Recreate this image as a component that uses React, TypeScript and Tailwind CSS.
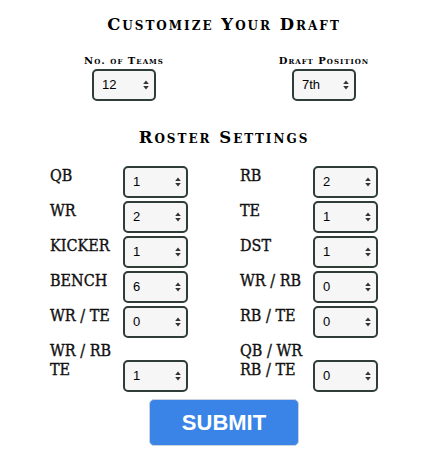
import { useState } from 'react'

const heading = "font-['DejaVu_Serif',serif] font-bold [font-variant:small-caps] text-black"
const label =
  "font-['DejaVu_Serif_Condensed','DejaVu_Serif',serif] text-[16px] leading-[19px] text-[#111] [-webkit-text-stroke:0.35px_#111]"

function Arrows() {
  return (
    <svg
      width="6"
      height="10"
      viewBox="0 0 6 10"
      className="pointer-events-none absolute right-[7px] top-1/2 -translate-y-1/2"
    >
      <path d="M3 0.5L5.8 4H0.2z M3 9.5L5.8 6H0.2z" fill="#333" />
    </svg>
  )
}

function Select({ value, options, w = 'w-[65px]' }: { value: string; options: string[]; w?: string }) {
  const [v, setV] = useState(value)
  return (
    <div className={`relative h-[32px] shrink-0 ${w}`}>
      <select
        value={v}
        onChange={(e) => setV(e.target.value)}
        className="h-full w-full appearance-none rounded-[5px] border-2 border-[#2e3d36] bg-[#f6f6f6] pl-[8px] font-['Liberation_Sans',Arial,sans-serif] text-[13px] text-black outline-none"
      >
        {options.map((o) => (
          <option key={o} value={o}>
            {o}
          </option>
        ))}
      </select>
      <Arrows />
    </div>
  )
}

const nums = ['0', '1', '2', '3', '4', '5', '6', '7', '8']

const rows: [string, string, string, string][] = [
  ['QB', '1', 'RB', '2'],
  ['WR', '2', 'TE', '1'],
  ['KICKER', '1', 'DST', '1'],
  ['BENCH', '6', 'WR / RB', '0'],
  ['WR / TE', '0', 'RB / TE', '0'],
]

function Field({ name, value, tall }: { name: string; value: string; tall?: boolean }) {
  return (
    <div className="flex items-start">
      <div className={`${label} w-[73px]`}>{name}</div>
      <div className={tall ? 'mt-[19px]' : ''}>
        <Select value={value} options={nums} />
      </div>
    </div>
  )
}

export default function App() {
  const teams = ['8', '10', '12', '14', '16']
  const positions = Array.from({ length: 16 }, (_, i) => {
    const n = i + 1
    const s = n === 1 ? 'st' : n === 2 ? 'nd' : n === 3 ? 'rd' : 'th'
    return n + s
  })

  return (
    <div className="min-h-[465px] w-[438px] bg-white">
      <div className="flex flex-col items-center pl-[10px] pt-[13px]">
        <h1 className={`${heading} text-[16.5px] leading-[24px] tracking-[2px]`}>Customize Your Draft</h1>
        <div className="mt-[18px] flex gap-[100px]">
          <div className="flex w-[100px] flex-col items-center">
            <div className={`${heading} whitespace-nowrap text-[10px] leading-[12px] tracking-[1px]`}>No. of Teams</div>
            <div className="mt-[2px]">
              <Select value="12" options={teams} w="w-[64px]" />
            </div>
          </div>
          <div className="flex w-[100px] flex-col items-center">
            <div className={`${heading} whitespace-nowrap text-[10px] leading-[12px] tracking-[1px]`}>Draft Position</div>
            <div className="mt-[2px]">
              <Select value="7th" options={positions} w="w-[64px]" />
            </div>
          </div>
        </div>
        <h2 className={`${heading} mt-[25px] text-[16.5px] leading-[24px] tracking-[2px]`}>Roster Settings</h2>
      </div>
      <div className="ml-[50px] mt-[16px] grid w-[328px] grid-cols-[138px_138px] gap-x-[52px] gap-y-[3px]">
        {rows.map((r) => (
          <div key={r[0]} className="contents">
            <Field name={r[0]} value={r[1]} />
            <Field name={r[2]} value={r[3]} />
          </div>
        ))}
        <Field name="WR / RB TE" value="1" tall />
        <Field name="QB / WR RB / TE" value="0" tall />
      </div>
      <div className="flex justify-center pl-[10px] pt-[7px]">
        <button className="h-[47px] w-[150px] rounded-[5px] border border-[#c9d3df] bg-[#3a84e8] font-['Liberation_Sans',Arial,sans-serif] text-[22px] font-bold text-white">
          SUBMIT
        </button>
      </div>
    </div>
  )
}
